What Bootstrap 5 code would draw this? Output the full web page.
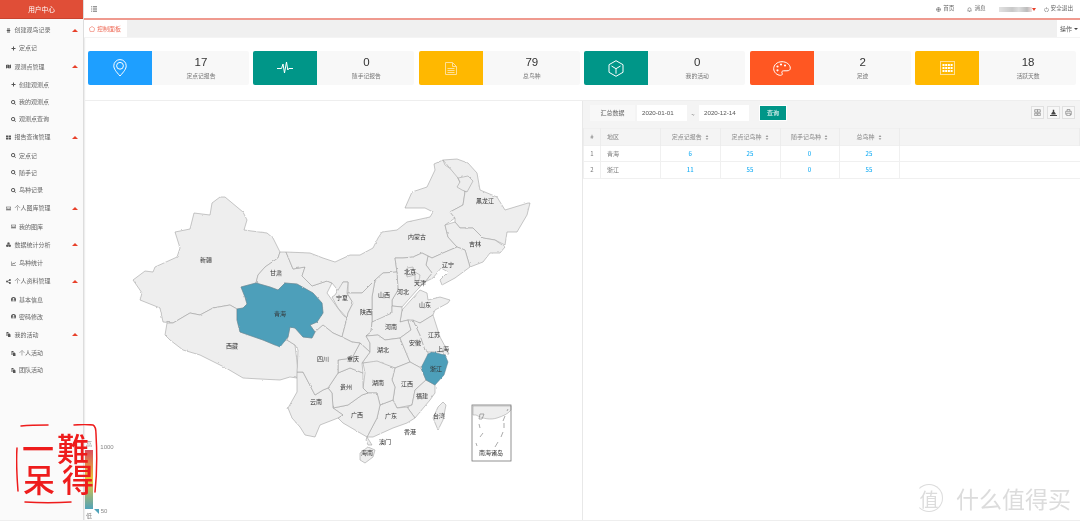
<!DOCTYPE html>
<html lang="zh">
<head>
<meta charset="utf-8">
<title>用户中心</title>
<link href="https://cdn.jsdelivr.net/npm/bootstrap@5.3.0/dist/css/bootstrap.min.css" rel="stylesheet">
<style>
html,body{height:524px;overflow:hidden;background:#fff}
body{font-family:"Noto Sans CJK SC","Liberation Sans",sans-serif;font-size:6px;color:#666;line-height:1;position:relative}
svg{display:block;flex:none}
.shell{height:521px;border-bottom:1px solid #eee;will-change:transform}
.side{width:84px;flex:none;background:#fafafa;border-right:1px solid #ddd;box-shadow:1px 0 1px #eee}
.brand{height:19px;background:#e04e37;color:#fff;font-size:6.7px;border-bottom:1px solid #c9432f}
.side .list-group{--bs-list-group-bg:transparent;--bs-list-group-border-width:0;--bs-list-group-item-padding-x:0;--bs-list-group-item-padding-y:0;--bs-list-group-color:#666;padding-top:1.5px;border-radius:0}
.grp{height:19.3px;padding-left:6px;gap:3.5px;border-bottom:1px solid #f3f3f3;border-top:0}
.kid{height:17.2px;padding-left:10.5px;gap:3.5px}
.ic{width:5px;height:5px;fill:#555}
.up{width:0;height:0;border:3px solid transparent;border-top:0;border-bottom:3px solid #e8402a;margin-left:auto;margin-right:5px}
.top{height:18px;background:#fff;padding:0 7px 0 7px;font-size:5.6px}
.top .ic{fill:none;stroke:#555;stroke-width:1}
.rule{height:2px;background:#ef9a8f}
.tabs{height:18px;background:#f0f0f0;border-bottom:1px solid #f4f4f4}
.tab-on{width:43px;background:#fff;color:#ef6f5c;padding-left:5px;gap:2px}
.tab-op{width:23px;background:#fff;color:#555;gap:2px;padding-left:3px}
.tri{width:0;height:0;border:2px solid transparent;border-bottom:0;border-top:2px solid #444}
.stats{display:grid;grid-template-columns:repeat(6,1fr);gap:4.5px;padding:13px 4px 16px 4px;border-bottom:1px solid #eee;height:63px}
.stat{height:34px;background:#f8f8f8;border-radius:2px;overflow:hidden}
.tile{width:65px;flex:none;border-right:1px solid #f8f8f8}
.tile svg{fill:none;stroke:#fff;stroke-width:1}
.t-blue{background:#1e9fff}.t-teal{background:#009688}.t-amber{background:#ffb800}.t-red{background:#ff5722}
.t-amber svg{stroke:#ffdf95}
.num{font-family:"Liberation Sans",sans-serif;font-size:11.5px;color:#333;margin-bottom:4px}
.lbl{font-size:5.8px;color:#777}
.mapbox{width:499px;flex:none;border-right:1px solid #e8e8e8}
.dash{flex:1;min-width:0}
.bar{height:27px;background:#f4f4f4;padding:4px 5px 0 7px;gap:0}
.addon{width:45px;height:16px;background:#f8f8f8;color:#666}
.dbox{width:50px;height:16px;background:#fff;color:#555;padding-left:5px;margin-left:2px;font-family:"Liberation Sans",sans-serif;font-size:6.2px}
.tilde{width:12px;text-align:center;margin-left:0;color:#777}
.btn-go{--bs-btn-padding-x:0;--bs-btn-padding-y:0;--bs-btn-font-size:6px;--bs-btn-bg:#009688;--bs-btn-border-color:#fff;--bs-btn-color:#fff;--bs-btn-border-radius:0;--bs-btn-line-height:1;width:28px;height:16px;margin-left:10px}
.tool{width:13px;height:13px;border:1px solid #e0e0e0;margin-left:2.5px;margin-top:1px;background:#f7f7f7}
.tool svg{fill:none;stroke:#666;stroke-width:.8}
.tbl{table-layout:fixed;width:100%;margin:0;font-size:6px;--bs-table-border-color:#f0f0f0;--bs-table-color:#777;line-height:1}
.tbl th,.tbl td{padding:0;height:16.4px;vertical-align:middle;font-weight:400;text-align:center}
.tbl thead th{background:#f4f4f4;color:#888;height:17px;border-color:#ececec}
.tbl .lft{text-align:left;padding-left:6px}
.tbl .link{color:#1fb0f5;font-weight:500}
.tbl td.blank{border:0}
.sort{display:inline-block;vertical-align:-1px;margin-left:3px;fill:#999}
.stamp{position:absolute;left:16px;top:424px;width:84px;height:84px;pointer-events:none}
.stamp-t{position:absolute;color:#ee1c1c;font-family:"Noto Sans CJK TC",sans-serif;font-weight:500;line-height:1}
.wm{position:absolute;left:915px;top:484px;color:#dcdcdc;gap:13px;font-size:23px;line-height:1}
.wm-c{width:28px;height:28px;border:1px solid #dcdcdc;border-left-color:transparent;border-radius:50%;font-size:19px}
</style>
</head>
<body>
<svg width="0" height="0" class="position-absolute">
<symbol id="i-plus" viewBox="0 0 10 10"><path d="M4 1h2v3h3v2H6v3H4V6H1V4h3z"/></symbol>
<symbol id="i-list" viewBox="0 0 10 10"><path d="M2 1h6v2H2zM1.500 4h7v2h-7zM2 7h6v2H2z"/></symbol>
<symbol id="i-map" viewBox="0 0 10 10"><path d="M0 2l3-1v7l-3 1zM3.600 1l2.800 1v7L3.600 8zM7 2l3-1v7L7 9z"/></symbol>
<symbol id="i-find" viewBox="0 0 10 10"><path d="M4.200 0a4.200 4.200 0 0 1 3.300 6.800L10 9l-1 1-2.300-2.400A4.200 4.200 0 1 1 4.200 0zm0 1.800a2.400 2.400 0 1 0 0 4.800 2.400 2.400 0 0 0 0-4.800z"/></symbol>
<symbol id="i-grid" viewBox="0 0 10 10"><path d="M0 1h4.500v3.500H0zM5.500 1H10v3.500H5.500zM0 5.500h4.500V9H0zM5.500 5.500H10V9H5.500z"/></symbol>
<symbol id="i-img" viewBox="0 0 10 10"><path fill-rule="evenodd" d="M0 1.500h10v7H0zM1 2.500v5h8v-5zM1.500 7l2-2.500L5 6l1.500-1.500L8.500 7z"/></symbol>
<symbol id="i-cubes" viewBox="0 0 10 10"><path d="M5 .5l2.300 1.200v2.600L5 5.500 2.700 4.300V1.700zM2.500 5l2.300 1.200v2.600L2.500 10 .2 8.800V6.200zM7.500 5l2.300 1.200v2.600L7.500 10 5.200 8.800V6.200z"/></symbol>
<symbol id="i-chart" viewBox="0 0 10 10"><path d="M0 1h1v7h9v1H0zM2 6.500l2.300-2.800 1.700 1.300L9 2l.7.700-3.600 3.700-1.700-1.300-1.700 2.400z"/></symbol>
<symbol id="i-share" viewBox="0 0 10 10"><circle cx="7.800" cy="2" r="1.900"/><circle cx="7.800" cy="8" r="1.900"/><circle cx="2" cy="5" r="1.900"/><path d="M2 4.500l5.500-3 .5 1-5.500 3zM2.500 4.500l5.500 3-.5 1-5.500-3z"/></symbol>
<symbol id="i-user" viewBox="0 0 10 10"><path fill-rule="evenodd" d="M5 0a5 5 0 1 1 0 10A5 5 0 0 1 5 0zm0 2a1.800 1.800 0 1 0 0 3.600A1.800 1.800 0 0 0 5 2zM2 7.800a4 4 0 0 0 6 0C7.500 6.700 6.300 6.300 5 6.300s-2.500.4-3 1.500z"/></symbol>
<symbol id="i-copy" viewBox="0 0 10 10"><path d="M1 0h4v2H3v6H1zM4 3h3l2 2v5H4z"/></symbol>
<symbol id="i-sort" viewBox="0 0 6 8"><path d="M3 0l2.200 3H.8zM3 8L.8 5h4.400z"/></symbol>
</svg>

<div class="shell d-flex">
  <aside class="side">
    <div class="brand d-flex align-items-center justify-content-center">用户中心</div>
    <div class="list-group list-group-flush">
      <div class="list-group-item grp d-flex align-items-center"><svg class="ic"><use href="#i-list"/></svg>创建观鸟记录<i class="up"></i></div>
      <div class="list-group-item kid d-flex align-items-center"><svg class="ic"><use href="#i-plus"/></svg>定点记</div>
      <div class="list-group-item grp d-flex align-items-center"><svg class="ic"><use href="#i-map"/></svg>观测点管理<i class="up"></i></div>
      <div class="list-group-item kid d-flex align-items-center"><svg class="ic"><use href="#i-plus"/></svg>创建观测点</div>
      <div class="list-group-item kid d-flex align-items-center"><svg class="ic"><use href="#i-find"/></svg>我的观测点</div>
      <div class="list-group-item kid d-flex align-items-center"><svg class="ic"><use href="#i-find"/></svg>观测点查询</div>
      <div class="list-group-item grp d-flex align-items-center"><svg class="ic"><use href="#i-grid"/></svg>报告查询管理<i class="up"></i></div>
      <div class="list-group-item kid d-flex align-items-center"><svg class="ic"><use href="#i-find"/></svg>定点记</div>
      <div class="list-group-item kid d-flex align-items-center"><svg class="ic"><use href="#i-find"/></svg>随手记</div>
      <div class="list-group-item kid d-flex align-items-center"><svg class="ic"><use href="#i-find"/></svg>鸟种记录</div>
      <div class="list-group-item grp d-flex align-items-center"><svg class="ic"><use href="#i-img"/></svg>个人图库管理<i class="up"></i></div>
      <div class="list-group-item kid d-flex align-items-center"><svg class="ic"><use href="#i-img"/></svg>我的图库</div>
      <div class="list-group-item grp d-flex align-items-center"><svg class="ic"><use href="#i-cubes"/></svg>数据统计分析<i class="up"></i></div>
      <div class="list-group-item kid d-flex align-items-center"><svg class="ic"><use href="#i-chart"/></svg>鸟种统计</div>
      <div class="list-group-item grp d-flex align-items-center"><svg class="ic"><use href="#i-share"/></svg>个人资料管理<i class="up"></i></div>
      <div class="list-group-item kid d-flex align-items-center"><svg class="ic"><use href="#i-user"/></svg>基本信息</div>
      <div class="list-group-item kid d-flex align-items-center"><svg class="ic"><use href="#i-user"/></svg>密码修改</div>
      <div class="list-group-item grp d-flex align-items-center"><svg class="ic"><use href="#i-copy"/></svg>我的活动<i class="up"></i></div>
      <div class="list-group-item kid d-flex align-items-center"><svg class="ic"><use href="#i-copy"/></svg>个人活动</div>
      <div class="list-group-item kid d-flex align-items-center"><svg class="ic"><use href="#i-copy"/></svg>团队活动</div>
    </div>
  </aside>

  <main class="flex-grow-1 d-flex flex-column" style="min-width:0">
    <nav class="top d-flex align-items-center">
      <svg width="6" height="6" viewBox="0 0 6 6" fill="none" stroke="#444" stroke-width=".8"><path d="M0 .8h.8M1.800 .8H6M0 3h.8M1.800 3H6M0 5.200h.8M1.800 5.200H6"/></svg>
      <div class="ms-auto d-flex align-items-center">
        <svg class="ic" style="margin-right:2px" viewBox="0 0 10 10"><circle cx="5" cy="5" r="4"/><path d="M1 5h8M5 1v8"/></svg><span>首页</span>
        <svg class="ic" style="margin-left:13px;margin-right:2px" viewBox="0 0 10 10"><path d="M2 7V4.500a3 3 0 0 1 6 0V7l1 1H1zM4 9h2"/></svg><span>消息</span>
        <span class="d-inline-block" style="width:33px;height:5px;margin-left:13px;background:linear-gradient(90deg,#e2e2e2,#c8c8c8 40%,#ddd 60%,#bbb 85%,#f3dede)"></span>
        <i class="d-inline-block" style="width:0;height:0;border:2.500px solid transparent;border-bottom:0;border-top:3px solid #e8402a"></i>
        <svg class="ic" style="margin-left:8px;margin-right:2px" viewBox="0 0 10 10"><path d="M3 2.200a4 4 0 1 0 4 0M5 .5v4"/></svg><span>安全退出</span>
      </div>
    </nav>
    <div class="rule"></div>
    <div class="tabs d-flex justify-content-between">
      <div class="tab-on d-flex align-items-center"><svg width="6" height="6" viewBox="0 0 10 10" fill="none" stroke="#ef6f5c" stroke-width="1"><path d="M5 .8L9.500 4 8 9.300H2L.5 4z"/></svg>控制面板</div>
      <div class="tab-op d-flex align-items-center">操作<i class="tri"></i></div>
    </div>

    <section class="stats">
      <div class="stat d-flex"><div class="tile t-blue d-flex align-items-center justify-content-center"><svg width="14" height="18" viewBox="0 0 14 18"><path d="M7 17C3 12.500.8 9.800.8 6.800a6.200 6.200 0 0 1 12.400 0C13.200 9.800 11 12.500 7 17z"/><circle cx="7" cy="6.800" r="3.400"/></svg></div><div class="flex-grow-1 d-flex flex-column align-items-center justify-content-center"><div class="num">17</div><div class="lbl">定点记报告</div></div></div>
      <div class="stat d-flex"><div class="tile t-teal d-flex align-items-center justify-content-center"><svg width="16" height="14" viewBox="0 0 16 14"><path d="M0 7.500h4.500L6 3l1.500 9L9.500 1l1.300 8 1-1.500H16"/></svg></div><div class="flex-grow-1 d-flex flex-column align-items-center justify-content-center"><div class="num">0</div><div class="lbl">随手记报告</div></div></div>
      <div class="stat d-flex"><div class="tile t-amber d-flex align-items-center justify-content-center"><svg width="12" height="13" viewBox="0 0 12 13"><path d="M.5.500h7l4 4v8H.5zM7.500.500v4h4M2.500 6.500h7M2.500 8.500h7M2.500 10.500h7"/></svg></div><div class="flex-grow-1 d-flex flex-column align-items-center justify-content-center"><div class="num">79</div><div class="lbl">总鸟种</div></div></div>
      <div class="stat d-flex"><div class="tile t-teal d-flex align-items-center justify-content-center"><svg width="16" height="17" viewBox="0 0 16 17"><path d="M8 .7l7 4v7.600l-7 4-7-4V4.700zM3.500 6L8 8.700 12.500 6M8 8.700v5"/></svg></div><div class="flex-grow-1 d-flex flex-column align-items-center justify-content-center"><div class="num">0</div><div class="lbl">我的活动</div></div></div>
      <div class="stat d-flex"><div class="tile t-red d-flex align-items-center justify-content-center"><svg width="18" height="15" viewBox="0 0 18 15"><path d="M9 .7C4 .7.700 4 .700 7.700c0 3.600 3.300 6.600 6.800 6.600 2 0 2-1.300 1.500-2.300-.6-1.300.2-2.200 1.700-2.200h3.300c2.200 0 3.300-1 3.300-2.600C17.300 3.600 13.500.7 9 .7z"/><g fill="#fff" stroke="none"><circle cx="4.500" cy="5.500" r="1.100"/><circle cx="8" cy="3.500" r="1.100"/><circle cx="12" cy="4.500" r="1.100"/><circle cx="4.500" cy="9.300" r="1.100"/></g></svg></div><div class="flex-grow-1 d-flex flex-column align-items-center justify-content-center"><div class="num">2</div><div class="lbl">足迹</div></div></div>
      <div class="stat d-flex"><div class="tile t-amber d-flex align-items-center justify-content-center"><svg width="15" height="14" viewBox="0 0 15 14"><rect x=".5" y=".5" width="14" height="13"/><g fill="#fff" stroke="none"><rect x="2.500" y="3" width="2" height="2"/><rect x="5.200" y="3" width="2" height="2"/><rect x="7.900" y="3" width="2" height="2"/><rect x="10.600" y="3" width="2" height="2"/><rect x="2.500" y="6" width="2" height="2"/><rect x="5.200" y="6" width="2" height="2"/><rect x="7.900" y="6" width="2" height="2"/><rect x="10.600" y="6" width="2" height="2"/><rect x="2.500" y="9" width="2" height="2"/><rect x="5.200" y="9" width="2" height="2"/><rect x="7.900" y="9" width="2" height="2"/><rect x="10.600" y="9" width="2" height="2"/></g></svg></div><div class="flex-grow-1 d-flex flex-column align-items-center justify-content-center"><div class="num">18</div><div class="lbl">活跃天数</div></div></div>
    </section>

    <div class="d-flex flex-grow-1" style="min-height:0">
      <div class="mapbox">
        <svg width="498" height="419" viewBox="84 101 498 419" font-size="6" text-anchor="middle" fill="#333">
          <defs>
            <linearGradient id="lg" x1="0" y1="0" x2="0" y2="1"><stop offset="0" stop-color="#d94e5d"/><stop offset=".5" stop-color="#eac736"/><stop offset="1" stop-color="#50a3ba"/></linearGradient>
            <filter id="rough" filterUnits="userSpaceOnUse" x="120" y="150" width="420" height="320"><feTurbulence type="fractalNoise" baseFrequency=".2" numOctaves="2" seed="4" result="n"/><feDisplacementMap in="SourceGraphic" in2="n" scale="2" xChannelSelector="R" yChannelSelector="G"/></filter>
          </defs>
          <g filter="url(#rough)">
          <g fill="#eee" stroke="#9a9a9a" stroke-width=".55" stroke-linejoin="round">
            <polygon points="133,280 145,271 153,272 155,267 177,257 180,248 175,232 190,229 194,213 210,215 212,203 220,197 225,197 243,212 247,220 244,230 267,233 273,238 280,252 278,258 265,267 258,275 256,283 241,287 245,297 247,304 243,308 237,309 230,305 213,308 200,315 190,313 173,323 163,322 160,308 140,300 142,293"/>
            <polygon points="173,323 190,313 200,315 213,308 230,305 237,309 237,320 240,332 263,340 275,345 287,340 295,345 298,370 297,378 290,377 280,380 260,379 243,378 226,368 200,355 183,350 170,340 165,335 167,323"/>
            <polygon points="280,252 286,252 293,269 305,267 302,276 312,286 327,281 332,283 327,293 337,307 343,315 347,318 342,337 333,333 323,325 315,332 310,325 317,322 323,313 322,303 313,293 297,284 285,283 278,290 270,287 256,283 258,275 265,267 278,258"/>
            <polygon points="286,252 310,253 323,258 335,262 350,255 360,255 373,248 378,238 382,232 397,230 407,222 430,217 433,212 425,208 405,208 412,192 427,187 435,170 434,164 443,160 445,165 457,173 458,178 465,192 463,205 450,212 455,218 445,225 448,237 457,247 443,253 432,258 428,256 422,253 413,257 403,258 395,258 397,272 383,273 375,280 362,293 348,293 348,282 343,282 340,293 332,283 327,281 312,286 302,276 305,267 293,269"/>
            <polygon points="443,160 457,159 468,163 477,173 480,190 497,197 505,210 528,203 530,203 527,215 517,232 507,232 505,245 495,240 483,238 473,228 460,228 455,222 455,218 450,212 463,205 465,192 458,178"/>
            <polygon points="458,178 468,176 473,181 467,192 462,190 457,187 460,182"/>
            <polygon points="445,225 455,222 460,228 473,228 483,238 495,240 505,247 500,253 490,253 483,262 470,267 465,250 457,247 448,237"/>
            <polygon points="457,247 465,250 470,267 455,278 442,285 440,280 448,272 441,268 433,278 425,282 432,273 426,265 428,256 432,258 443,253"/>
            <polygon points="395,258 403,258 413,257 422,253 428,256 426,265 432,273 425,282 417,290 402,307 392,306 392,300 398,290 397,272"/>
            <polygon points="407,268 413,267 415,275 407,277"/>
            <polygon points="415,272 420,275 418,285 415,282"/>
            <polygon points="375,280 372,297 372,322 378,320 392,313 392,300 398,290 397,272 383,273"/>
            <polygon points="343,282 348,282 347,293 353,303 348,313 347,318 338,308 332,297 335,295"/>
            <polygon points="347,293 362,293 375,280 372,297 372,322 371,332 366,336 370,343 370,352 360,343 352,342 342,337 347,318 348,313 353,303"/>
            <polygon points="420,290 427,293 428,300 440,297 450,300 448,303 435,310 433,315 420,323 408,320 400,322 402,310"/>
            <polygon points="372,322 392,313 392,306 402,307 402,310 400,322 408,320 411,330 400,338 385,340 378,335 366,336 371,332"/>
            <polygon points="366,336 378,335 385,340 400,338 405,350 410,362 395,368 378,363 364,363 362,363 370,352 370,343"/>
            <polygon points="408,320 413,320 420,335 425,350 428,352 428,357 421,368 410,362 405,350 400,338 411,330"/>
            <polygon points="420,323 433,315 440,337 447,350 442,352 428,352 425,350 420,335 413,320"/>
            <polygon points="442,350 447,350 449,354 444,355"/>
            <polygon points="395,368 410,362 421,368 426,380 415,390 412,405 397,408 393,400 395,387 392,380"/>
            <polygon points="426,380 435,385 435,393 430,400 415,418 407,407 412,405 415,390"/>
            <polygon points="397,408 407,407 415,418 407,423 393,428 373,437 367,437 377,418 380,405 393,400"/>
            <polygon points="363,363 377,361 395,368 392,380 395,387 393,400 380,405 377,393 368,393 363,388 365,373"/>
            <polygon points="333,408 348,405 362,395 368,393 377,393 380,405 377,418 367,437 355,430 343,423 338,418 343,415"/>
            <polygon points="328,388 338,373 350,368 363,373 363,388 368,393 362,395 348,405 333,408 332,393"/>
            <polygon points="297,372 303,372 315,395 323,390 328,388 332,393 333,408 343,415 338,418 320,425 315,437 305,435 300,427 292,418 288,408 297,392"/>
            <polygon points="338,360 352,358 360,343 370,352 362,363 363,373 350,368 338,373"/>
            <polygon points="288,337 290,327 295,328 303,337 312,338 315,332 323,325 333,333 342,337 352,342 360,343 352,358 338,360 338,373 328,388 323,390 315,395 303,372 297,372 298,350 295,345 287,340"/>
            <polygon points="360,453 368,447 375,450 373,457 365,463 360,460"/>
            <polygon points="367,437 372,445 368,445 366,440"/>
            <polygon points="443,402 446,405 443,420 438,430 433,418 438,407"/>
          </g>
          <g fill="#4e9fba" stroke="#5a7f8c" stroke-width=".5" stroke-linejoin="round">
            <polygon points="241,287 256,283 270,287 278,290 285,283 297,284 313,293 322,303 323,313 317,322 310,325 315,332 312,338 303,337 295,328 290,327 288,337 280,347 275,345 263,340 240,332 237,320 237,309 243,308 247,304 245,297"/>
            <polygon points="432,352 445,355 448,362 444,375 435,385 426,380 421,368 428,354"/>
          </g>
          </g>
          <g fill="#eee" stroke="#999" stroke-width=".5">
            <path d="M473 406h38v4c-3 4-8 6-14 8-6 2-14 1-21-3h-3z"/>
          </g>
          <rect x="472" y="405" width="39" height="56" fill="none" stroke="#777" stroke-width=".8"/>
          <g fill="none" stroke="#888" stroke-width=".7"><path d="M507 411l1-2M480 414l4 0-2 5h-3zM505 416l-2 5M479 424l1 4M504 423v5M483 433l-3 4M503 432l-2 5M476 443l1 3M498 442l-3 5"/></g>
          <g>
            <text x="206" y="262">新疆</text><text x="276" y="275">甘肃</text><text x="280" y="316">青海</text><text x="232" y="348">西藏</text><text x="323" y="361">四川</text><text x="342" y="300">宁夏</text><text x="366" y="314">陕西</text><text x="417" y="239">内蒙古</text><text x="485" y="203">黑龙江</text><text x="475" y="246">吉林</text><text x="448" y="267">辽宁</text><text x="410" y="274">北京</text><text x="420" y="285">天津</text><text x="403" y="294">河北</text><text x="384" y="297">山西</text><text x="425" y="307">山东</text><text x="391" y="329">河南</text><text x="434" y="337">江苏</text><text x="415" y="345">安徽</text><text x="443" y="351">上海</text><text x="383" y="352">湖北</text><text x="353" y="361">重庆</text><text x="436" y="371">浙江</text><text x="407" y="386">江西</text><text x="378" y="385">湖南</text><text x="346" y="389">贵州</text><text x="422" y="398">福建</text><text x="316" y="404">云南</text><text x="357" y="417">广西</text><text x="391" y="418">广东</text><text x="439" y="418">台湾</text><text x="410" y="434">香港</text><text x="385" y="444">澳门</text><text x="367" y="455">海南</text><text x="491" y="455">南海诸岛</text>
          </g>
          <rect x="85" y="450" width="8" height="59" fill="url(#lg)"/>
          <polygon points="94,509 99,509 99,514" fill="#50a3ba"/>
          <g fill="#888"><text x="89" y="446">高</text><text x="89" y="518">低</text><text x="107" y="449" font-family="Liberation Sans">1000</text><text x="104" y="513" font-family="Liberation Sans">50</text></g>
        </svg>
      </div>

      <div class="dash">
        <div class="bar d-flex align-items-start">
          <div class="addon d-flex align-items-center justify-content-center">汇总数据</div>
          <div class="dbox d-flex align-items-center">2020-01-01</div>
          <div class="tilde align-self-center" style="margin-top:-4px">~</div>
          <div class="dbox d-flex align-items-center" style="margin-left:0">2020-12-14</div>
          <button type="button" class="btn btn-go">查询</button>
          <div class="ms-auto d-flex">
            <div class="tool d-flex align-items-center justify-content-center"><svg width="7" height="7" viewBox="0 0 10 10"><path d="M1 1h8v3.500H1zM1 6h3.500v3.500H1zM5.500 6H9v3.500H5.500zM5 1v3.500"/></svg></div>
            <div class="tool d-flex align-items-center justify-content-center"><svg width="7" height="7" viewBox="0 0 10 10"><path fill="#444" stroke="none" d="M4 1h2v3l2 2v2H2V6l2-2zM0 8.500h10V10H0z"/></svg></div>
            <div class="tool d-flex align-items-center justify-content-center"><svg width="7" height="7" viewBox="0 0 10 10"><path d="M3 3V.7h4V3M1 8V3.300h8V8H7.500M2.500 6h5v3.500h-5z"/></svg></div>
          </div>
        </div>
        <table class="table table-bordered tbl">
          <colgroup><col style="width:17px"><col style="width:60px"><col style="width:59.500px"><col style="width:60px"><col style="width:59px"><col style="width:60px"><col></colgroup>
          <thead><tr><th>#</th><th class="lft">地区</th><th>定点记报告<svg class="sort" width="4" height="5"><use href="#i-sort"/></svg></th><th>定点记鸟种<svg class="sort" width="4" height="5"><use href="#i-sort"/></svg></th><th>随手记鸟种<svg class="sort" width="4" height="5"><use href="#i-sort"/></svg></th><th>总鸟种<svg class="sort" width="4" height="5"><use href="#i-sort"/></svg></th><th></th></tr></thead>
          <tbody>
            <tr><td>1</td><td class="lft">青海</td><td class="link">6</td><td class="link">25</td><td class="link">0</td><td class="link">25</td><td class="blank"></td></tr>
            <tr><td>2</td><td class="lft">浙江</td><td class="link">11</td><td class="link">55</td><td class="link">0</td><td class="link">55</td><td class="blank"></td></tr>
          </tbody>
        </table>
      </div>
    </div>
  </main>
</div>

<div class="stamp">
  <svg width="84" height="84" viewBox="0 0 84 84" fill="none" stroke="#ee1c1c" stroke-width="1.500" stroke-linecap="round"><path d="M5 2c10-1 22-1 27-1M58 1c6-.5 15-.5 19 0 2 1 3 4 3 9 1 18 1 40-1 58M1 24c-1 14 0 30 1 43M9 78c14 1 32 1 46 0"/></svg>
  <span class="stamp-t" style="left:6px;top:7px;font-size:32px">一</span>
  <span class="stamp-t" style="left:7px;top:38px;font-size:32px">呆</span>
  <span class="stamp-t" style="left:41px;top:7px;font-size:32px">難</span>
  <span class="stamp-t" style="left:46px;top:38px;font-size:32px">得</span>
</div>

<div class="wm d-flex align-items-center"><span class="wm-c d-flex align-items-center justify-content-center">值</span><span>什么值得买</span></div>

<script src="https://cdn.jsdelivr.net/npm/bootstrap@5.3.0/dist/js/bootstrap.bundle.min.js"></script>
</body>
</html>
